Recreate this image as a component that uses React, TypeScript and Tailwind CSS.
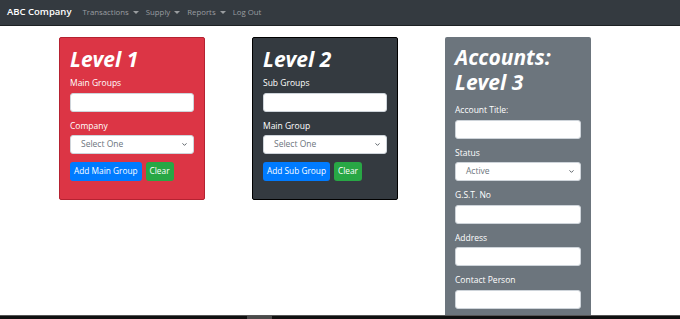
import { ChevronDown } from 'lucide-react';

const body = { fontFamily: '"Open Sans", "Liberation Sans", sans-serif' };
const head = { fontFamily: '"Open Sans", "DejaVu Sans", sans-serif' };

function Caret() {
  return <span className="inline-block ml-[4px] align-middle border-x-[3px] border-x-transparent border-t-[3px] border-t-current" />;
}

function Field({ label }: { label: string }) {
  return (
    <div>
      <label className="block text-[8.5px] text-white leading-none mb-[5px]">{label}</label>
      <div className="h-[19px] bg-white rounded-[3px] border border-[#ced4da]" />
    </div>
  );
}

function Select({ label, value }: { label: string; value: string }) {
  return (
    <div>
      <label className="block text-[8.5px] text-white leading-none mb-[5px]">{label}</label>
      <div className="h-[19px] bg-white rounded-[3px] border border-[#ced4da] flex items-center justify-between pl-[10px] pr-[5px]">
        <span className="text-[8.5px] text-[#6c757d]">{value}</span>
        <ChevronDown className="w-[7px] h-[7px] text-[#495057]" strokeWidth={3} />
      </div>
    </div>
  );
}

function Btn({ children, green }: { children: string; green?: boolean }) {
  return (
    <button
      className={`h-[19px] px-[4px] rounded-[3px] text-[8.3px] text-white ${green ? 'bg-[#28a745]' : 'bg-[#007bff]'}`}
    >
      {children}
    </button>
  );
}

export default function App() {
  return (
    <div className="w-[680px] h-[319px] bg-white overflow-hidden relative" style={body}>
      <nav className="h-[26px] bg-[#343a40] border-b border-[#1d2124] flex items-center px-[7px]">
        <span className="text-white text-[9.5px] font-semibold mr-[11px]">ABC Company</span>
        <div className="flex items-center gap-[7px] text-[7.8px] text-[#9a9da0]">
          <span>Transactions<Caret /></span>
          <span>Supply<Caret /></span>
          <span>Reports<Caret /></span>
          <span>Log Out</span>
        </div>
      </nav>

      <div className="flex items-start gap-[47px] pl-[59px] pt-[11px]">
        <section className="w-[146px] h-[163px] bg-[#dc3545] border border-[#b52231] rounded-[2px] px-[10px] pt-[8px]">
          <h2 className="text-white text-[21px] font-bold italic leading-[26px] mb-[7px]" style={head}>Level 1</h2>
          <div className="flex flex-col gap-[10px]">
            <Field label="Main Groups" />
            <Select label="Company" value="Select One" />
          </div>
          <div className="flex gap-[4px] mt-[8px]">
            <Btn>Add Main Group</Btn>
            <Btn green>Clear</Btn>
          </div>
        </section>

        <section className="w-[146px] h-[163px] bg-[#343a40] border border-black rounded-[2px] px-[10px] pt-[8px]">
          <h2 className="text-white text-[21px] font-bold italic leading-[26px] mb-[7px]" style={head}>Level 2</h2>
          <div className="flex flex-col gap-[10px]">
            <Field label="Sub Groups" />
            <Select label="Main Group" value="Select One" />
          </div>
          <div className="flex gap-[4px] mt-[8px]">
            <Btn>Add Sub Group</Btn>
            <Btn green>Clear</Btn>
          </div>
        </section>

        <section className="w-[146px] h-[300px] bg-[#6c757d] rounded-[2px] px-[10px] pt-[8px]">
          <h2 className="text-white text-[21px] font-bold italic leading-[25px] mb-[11px]" style={head}>
            Accounts:
            <br />
            Level 3
          </h2>
          <div className="flex flex-col gap-[10px]">
            <Field label="Account Title:" />
            <Select label="Status" value="Active" />
            <Field label="G.S.T. No" />
            <Field label="Address" />
            <Field label="Contact Person" />
          </div>
        </section>
      </div>

      <div className="absolute left-0 right-0 bottom-0 h-[4px] bg-[#101010] border-t border-[#555]">
        <div className="ml-[247px] w-[25px] h-full bg-[#4a4a4a]" />
      </div>
    </div>
  );
}
